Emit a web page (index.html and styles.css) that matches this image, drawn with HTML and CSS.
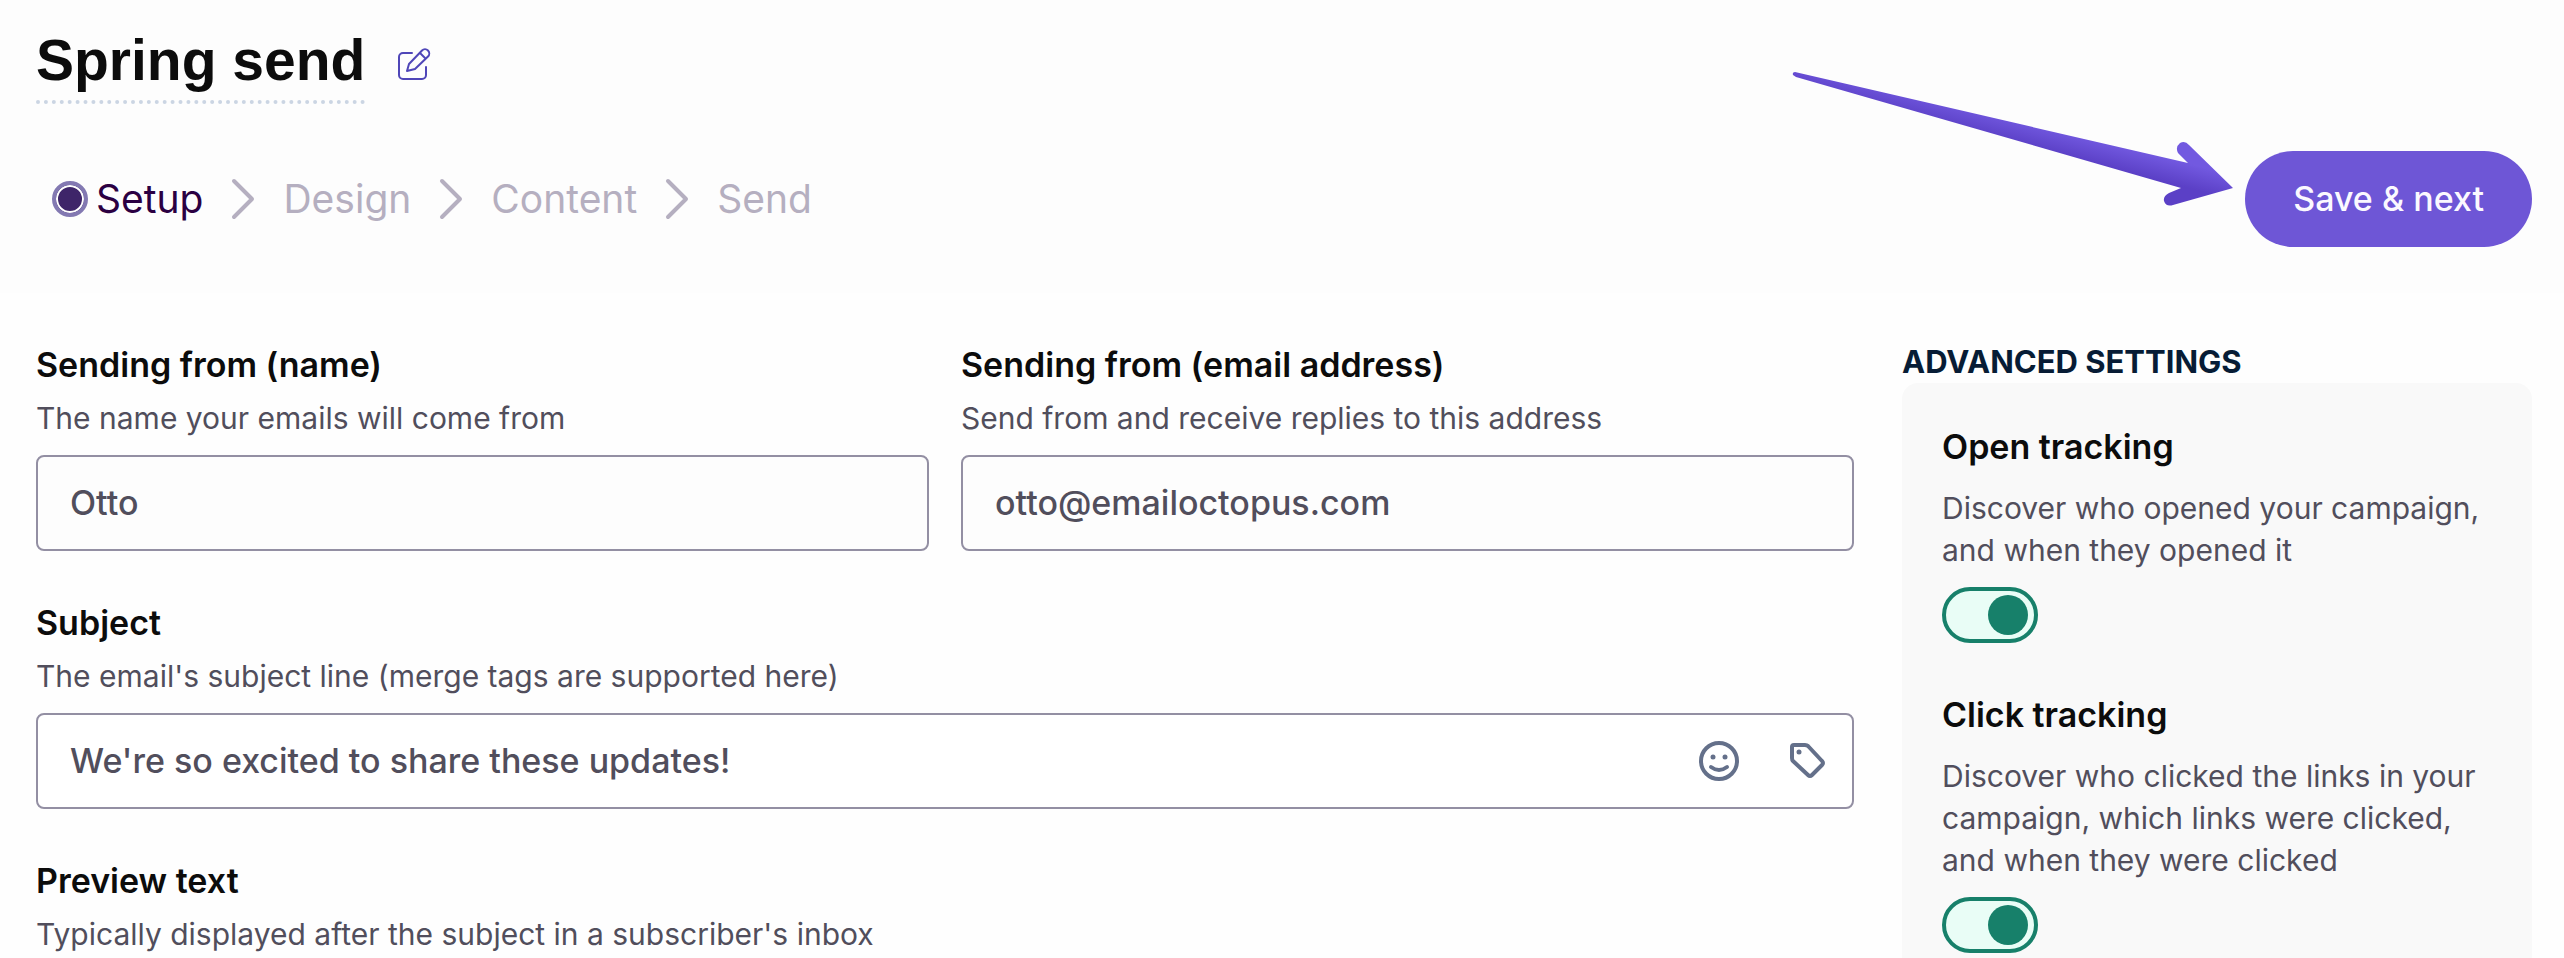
FILE: index.html
```html
<!DOCTYPE html>
<html lang="en">
<head>
    <meta charset="UTF-8">
    <meta name="viewport" content="width=device-width, initial-scale=1.0">
    <title>Spring send - Setup</title>
    <link rel="stylesheet" href="styles.css">
</head>
<body>
    <header class="header">
        <div class="title-row">
            <h1>Spring send</h1>
            <button type="button" class="icon-btn edit-btn" aria-label="Rename campaign">
                <svg width="34" height="34" viewBox="0 0 34 34" fill="none" stroke="currentColor" stroke-width="2" stroke-linecap="round" stroke-linejoin="round">
                    <path d="M15 6H6a4 4 0 0 0-4 4v18a4 4 0 0 0 4 4h19a4 4 0 0 0 4-4v-8"/>
                    <path d="M10 24l2-7L25 3.500a3.900 3.900 0 0 1 6 6L18 22z"/>
                    <path d="M23 6l5 5"/>
                </svg>
            </button>
        </div>

        <div class="steps-row">
            <nav class="steps" aria-label="Campaign steps">
                <a href="#setup" class="step step-active"><span class="step-marker"></span>Setup</a>
                <svg class="chevron" width="24" height="42" viewBox="0 0 24 42"><path d="M3 3l18 18L3 39"/></svg>
                <a href="#design" class="step">Design</a>
                <svg class="chevron" width="24" height="42" viewBox="0 0 24 42"><path d="M3 3l18 18L3 39"/></svg>
                <a href="#content" class="step">Content</a>
                <svg class="chevron" width="24" height="42" viewBox="0 0 24 42"><path d="M3 3l18 18L3 39"/></svg>
                <a href="#send" class="step">Send</a>
            </nav>
            <div class="save">
                <svg class="arrow" width="442" height="136" viewBox="0 0 442 136" aria-hidden="true">
                    <defs>
                        <linearGradient id="arrowFill" gradientUnits="userSpaceOnUse" x1="303" y1="68" x2="297" y2="91">
                            <stop offset="0" stop-color="#7259e0"/>
                            <stop offset="1" stop-color="#5b40c6"/>
                        </linearGradient>
                    </defs>
                    <path fill="url(#arrowFill)" d="M3 1Q0 1 1 4L4 6L389 117L377 122Q371 125 372 130Q374 136 381 134L441 117L397 74Q393 69 388 72Q383 76 386 82L396 92L3 1Z"/>
                </svg>
                <button type="submit" form="setupForm" class="btn-primary">Save &amp; next</button>
            </div>
        </div>
    </header>

    <main class="content">
        <form class="form" id="setupForm">
            <div class="field">
                <label for="fromName">Sending from (name)</label>
                <p class="help">The name your emails will come from</p>
                <div class="input-box muted">
                    <input type="text" id="fromName" value="Otto">
                </div>
            </div>
            <div class="field">
                <label for="fromEmail">Sending from (email address)</label>
                <p class="help">Send from and receive replies to this address</p>
                <div class="input-box muted">
                    <input type="email" id="fromEmail" value="otto@emailoctopus.com">
                </div>
            </div>
            <div class="field wide">
                <label for="subject">Subject</label>
                <p class="help">The email's subject line (merge tags are supported here)</p>
                <div class="input-box">
                    <input type="text" id="subject" value="We're so excited to share these updates!">
                    <button type="button" class="icon-btn" aria-label="Insert emoji">
                        <svg width="40" height="40" viewBox="0 0 40 40" fill="none" stroke="currentColor" stroke-width="4" stroke-linecap="round">
                            <circle cx="20" cy="20" r="18"/>
                            <path d="M12 26q8 6 16 0"/>
                            <circle cx="14" cy="16" r="2.500" fill="currentColor" stroke="none"/>
                            <circle cx="26" cy="16" r="2.500" fill="currentColor" stroke="none"/>
                        </svg>
                    </button>
                    <button type="button" class="icon-btn" aria-label="Insert merge tag">
                        <svg width="40" height="40" viewBox="0 0 40 40" fill="none" stroke="currentColor" stroke-width="4" stroke-linejoin="round">
                            <path d="M7 4H18q2 0 3 1L35 20q2 2 0 4L25 34q-2 2-4 0L6 20Q5 19 5 17V6q0-2 2-2z"/>
                            <circle cx="12" cy="11" r="2.500" fill="currentColor" stroke="none"/>
                        </svg>
                    </button>
                </div>
            </div>
            <div class="field wide">
                <span class="label">Preview text</span>
                <p class="help">Typically displayed after the subject in a subscriber's inbox</p>
            </div>
        </form>

        <aside class="sidebar">
            <h2>Advanced settings</h2>
            <div class="panel">
                <div class="setting">
                    <label for="openTracking">Open tracking</label>
                    <p>Discover who opened your campaign, and when they opened it</p>
                    <input type="checkbox" class="toggle" id="openTracking" checked>
                </div>
                <div class="setting">
                    <label for="clickTracking">Click tracking</label>
                    <p>Discover who clicked the links in your campaign, which links were clicked, and when they were clicked</p>
                    <input type="checkbox" class="toggle" id="clickTracking" checked>
                </div>
            </div>
        </aside>
    </main>
</body>
</html>
```

FILE: styles.css
```css
:root {
    --primary-color: #6e56d6;
    --toggle-color: #17806a;
    --border-color: #938fa3;
    --heading-color: #0c0c0c;
    --text-color: #514e5c;
    --muted-color: #b5afc0;
}

* {
    margin: 0;
    padding: 0;
    box-sizing: border-box;
}

body {
    min-height: 100vh;
    display: flex;
    flex-direction: column;
    background: #fefefe;
    color: var(--text-color);
    font-family: Inter, "Open Sans", sans-serif;
    font-size: 30px;
    line-height: 42px;
}

button,
input {
    font: inherit;
    color: inherit;
    border: none;
    background: none;
}

button {
    cursor: pointer;
}

.header {
    background: #fdfdfd;
    padding: 24px 32px 46px 36px;
}

.title-row {
    display: flex;
    align-items: center;
    gap: 32px;
}

h1 {
    color: var(--heading-color);
    font-family: "Liberation Sans", Arial, sans-serif;
    font-size: 57px;
    line-height: 72px;
    padding-bottom: 4px;
    border-bottom: 4px dotted #cbd5e3;
}

.icon-btn {
    display: flex;
    color: #64708a;
}

.edit-btn {
    color: #4f46b8;
}

.steps-row {
    display: flex;
    align-items: center;
    justify-content: space-between;
    margin-top: 47px;
}

.steps {
    display: flex;
    align-items: center;
    gap: 28px;
    padding-left: 16px;
}

.step {
    display: flex;
    align-items: center;
    gap: 8px;
    color: var(--muted-color);
    font-size: 39px;
    text-decoration: none;
}

.step-active {
    color: #2b0042;
}

.step-marker {
    width: 36px;
    height: 36px;
    border: 4px solid #8379b2;
    border-radius: 50%;
    background: #3e2569;
    box-shadow: inset 0 0 0 2px #fff;
}

.chevron {
    fill: none;
    stroke: var(--muted-color);
    stroke-width: 4px;
    stroke-linecap: round;
    stroke-linejoin: round;
}

.save {
    position: relative;
}

/* pointer drawn over the header, ending at the button */
.arrow {
    position: absolute;
    right: 298px;
    top: -80px;
}

.btn-primary {
    height: 96px;
    padding: 0 48px;
    border-radius: 48px;
    background: var(--primary-color);
    color: #fbf9ff;
    font-size: 34px;
    font-weight: 500;
}

.content {
    flex: 1;
    display: grid;
    grid-template-columns: minmax(0, 1fr) 630px;
    gap: 48px;
    padding: 48px 32px 0 36px;
}

.form {
    display: grid;
    grid-template-columns: 1fr 1fr;
    gap: 48px 32px;
    align-content: start;
}

.wide {
    grid-column: 1 / -1;
}

label,
.label {
    display: block;
    color: var(--heading-color);
    font-size: 34px;
    font-weight: 600;
    line-height: 48px;
}

.help {
    padding: 8px 0 16px;
}

.input-box {
    display: flex;
    align-items: center;
    gap: 48px;
    height: 96px;
    padding: 0 25px 0 32px;
    border: 2px solid var(--border-color);
    border-radius: 8px;
    background: #fff;
}

.input-box.muted {
    background: #fdfdfd;
}

.input-box input {
    flex: 1;
    min-width: 0;
    font-size: 34px;
    font-weight: 500;
    outline: none;
}

.sidebar {
    display: flex;
    flex-direction: column;
}

h2 {
    color: #071c35;
    font-size: 31px;
    font-weight: 700;
    line-height: 42px;
    text-transform: uppercase;
}

.panel {
    flex: 1;
    padding: 40px 40px 5px;
    border-radius: 16px 16px 0 0;
    background: #f9f9f9;
}

.setting + .setting {
    margin-top: 48px;
}

.setting p {
    padding: 16px 0;
}

.toggle {
    appearance: none;
    display: block;
    width: 96px;
    height: 56px;
    padding: 4px 6px;
    border: 4px solid var(--toggle-color);
    border-radius: 28px;
    background: #e9fdf6;
    cursor: pointer;
}

.toggle::before {
    content: "";
    display: block;
    width: 40px;
    height: 40px;
    border-radius: 50%;
    background: var(--toggle-color);
}

.toggle:checked::before {
    margin-left: auto;
}
```
